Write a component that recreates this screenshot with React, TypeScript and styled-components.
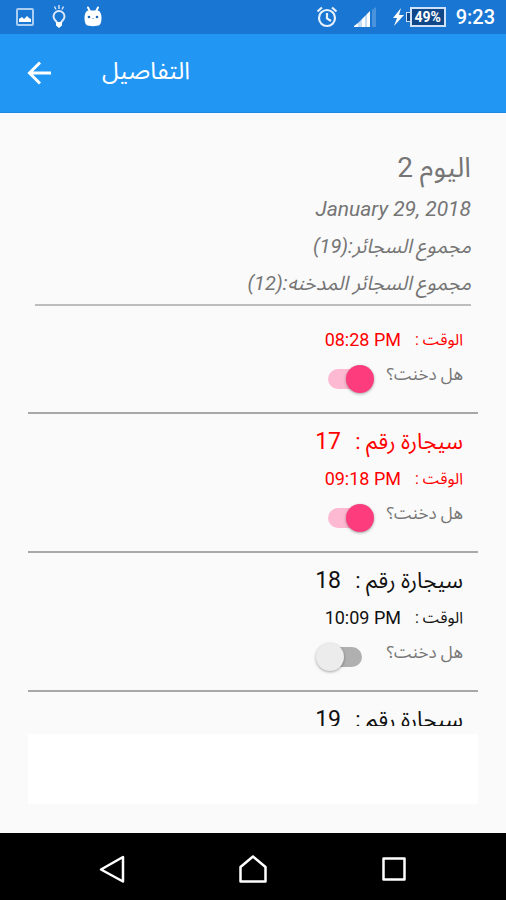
import React from "react";
import styled, { createGlobalStyle } from "styled-components";

const GlobalStyle = createGlobalStyle`
  *, *::before, *::after { box-sizing: border-box; }
  body {
    margin: 0;
    background: #fafafa;
    font-family: Roboto, "Noto Sans Arabic", "Noto Naskh Arabic", "DejaVu Sans", sans-serif;
  }
  h1, h2, p { margin: 0; font-weight: 400; }
`;

const Screen = styled.div`
  display: flex;
  flex-direction: column;
  height: 100vh;
  background: #fafafa;
`;

const StatusBar = styled.div`
  display: flex;
  align-items: center;
  justify-content: space-between;
  flex: none;
  height: 34px;
  padding: 0 11px 0 15px;
  background: #1976d2;
  color: #fff;
`;

const StatusGroup = styled.div<{ $gap: number }>`
  display: flex;
  align-items: center;
  gap: ${(p) => p.$gap}px;
`;

const Clock = styled.span`
  margin-left: 8px;
  font-size: 20px;
  font-weight: 500;
  line-height: 34px;
`;

const Battery = styled.span`
  display: flex;
  align-items: center;
`;

const BatteryTip = styled.span`
  width: 4px;
  height: 10px;
  border: 1px solid #cfe2f7;
  border-right: 0;
  background: #0f4788;
`;

const BatteryBody = styled.span`
  width: 36px;
  height: 20px;
  border: 2px solid #cfe2f7;
  background: #0f4788;
  font-size: 14px;
  font-weight: 700;
  line-height: 16px;
  text-align: center;
`;

const AppBar = styled.header`
  display: flex;
  align-items: center;
  gap: 48px;
  flex: none;
  height: 79px;
  padding: 0 24px;
  border-bottom: 1px solid #1e88e5;
  background: #2196f3;
  color: #fff;
`;

const IconButton = styled.button`
  display: flex;
  padding: 0;
  border: 0;
  background: none;
  color: inherit;
  cursor: pointer;
`;

const AppTitle = styled.h1`
  font-size: 24px;
  line-height: 32px;
  padding-bottom: 4px;
`;

const Content = styled.main`
  display: flex;
  flex-direction: column;
  flex: 1;
  min-height: 0;
  padding: 32px 28px 29px;
`;

const Summary = styled.section`
  margin: 0 7px;
  padding-bottom: 2px;
  border-bottom: 2px solid #bdbdbd;
  color: #757575;
`;

const DayTitle = styled.h2`
  font-size: 28px;
  line-height: 46px;
`;

const SummaryLine = styled.p`
  font-size: 20px;
  font-style: italic;
  line-height: 37px;
`;

const SummaryDate = styled(SummaryLine)`
  font-size: 21px;
`;

const List = styled.ul`
  flex: 1;
  min-height: 0;
  margin: 16px 0 0;
  padding: 0;
  overflow: hidden;
  list-style: none;
`;

const Entry = styled.li<{ $smoked: boolean }>`
  padding: 0 15px 18px;
  border-bottom: 2px solid #a8a8a8;
  color: ${(p) => (p.$smoked ? "#ff0000" : "#111111")};
`;

const EntryTitle = styled.div`
  display: flex;
  padding-top: 9px;
  font-size: 22px;
  line-height: 38px;
`;

const TitleLabel = styled.span`
  width: 122px;
  white-space: nowrap;
`;

const TitleNumber = styled.span`
  font-size: 23px;
`;

const EntryTime = styled.div`
  display: flex;
  font-size: 16px;
  line-height: 36px;
`;

const TimeLabel = styled.span`
  width: 62px;
  white-space: nowrap;
`;

const TimeValue = styled.span`
  font-size: 18px;
`;

const Question = styled.label`
  display: flex;
  align-items: flex-start;
  gap: 13px;
  height: 36px;
  color: #757575;
  font-size: 17px;
  line-height: 32px;
`;

const QuestionText = styled.span`
  white-space: nowrap;
`;

const Switch = styled.input`
  position: relative;
  appearance: none;
  flex: none;
  width: 58px;
  height: 28px;
  margin: 7px 0 0;
  direction: ltr;
  cursor: pointer;

  &::before {
    content: "";
    position: absolute;
    inset: 4px 12px;
    border-radius: 10px;
    background: #b0b0b0;
  }
  &::after {
    content: "";
    position: absolute;
    top: 0;
    left: 0;
    width: 28px;
    height: 28px;
    border-radius: 50%;
    background: #ececec;
    box-shadow: 0 1px 3px rgba(0, 0, 0, 0.35);
  }
  &:checked::before { background: #fdb9d1; }
  &:checked::after { left: 30px; background: #fc3c7c; }
`;

const AdSlot = styled.aside`
  flex: none;
  height: 70px;
  margin-top: 8px;
  background: #fff;
`;

const NavBar = styled.nav`
  display: flex;
  align-items: center;
  justify-content: space-around;
  flex: none;
  height: 67px;
  padding: 4px 42px 0;
  background: #000;
  color: #fff;
`;

type CigaretteEntry = { id: number; time?: string; smoked: boolean; titleShown?: boolean };

const entries: CigaretteEntry[] = [
  { id: 16, time: "08:28 PM", smoked: true, titleShown: false },
  { id: 17, time: "09:18 PM", smoked: true },
  { id: 18, time: "10:09 PM", smoked: false },
  { id: 19, smoked: false },
];

function EntryRow({ entry }: { entry: CigaretteEntry }) {
  const switchId = `smoked-${entry.id}`;
  return (
    <Entry $smoked={entry.smoked}>
      {entry.titleShown !== false && (
        <EntryTitle>
          <TitleLabel>سيجارة رقم :</TitleLabel>
          <TitleNumber>{entry.id}</TitleNumber>
        </EntryTitle>
      )}
      {entry.time && (
        <>
          <EntryTime>
            <TimeLabel>الوقت :</TimeLabel>
            <TimeValue dir="ltr">{entry.time}</TimeValue>
          </EntryTime>
          <Question htmlFor={switchId}>
            <QuestionText>هل دخنت؟</QuestionText>
            <Switch id={switchId} type="checkbox" role="switch" defaultChecked={entry.smoked} />
          </Question>
        </>
      )}
    </Entry>
  );
}

const PictureIcon = () => (
  <svg width="20" height="20" viewBox="0 0 20 20" aria-hidden="true">
    <rect x="2" y="2" width="16" height="16" rx="1" fill="none" stroke="#a9cdf3" strokeWidth="2" />
    <path d="M4 15v-3l3-2 2 2 3-3 2 2 2 1v3z" fill="#fff" />
  </svg>
);

const BulbIcon = () => (
  <svg width="18" height="24" viewBox="0 0 18 24" fill="none" stroke="#d9e9fb" aria-hidden="true">
    <path d="M7 18c0-2-3.500-3-3.500-6.500a5.500 5.500 0 0 1 11 0c0 3.500-3.500 4.500-3.500 6.500z" strokeWidth="2" />
    <path d="M6 17h6v3.500l-3 2.500-3-2.500z" fill="#fff" stroke="none" />
    <path d="M9 0v4M4.500 1.500l1.500 3M13.500 1.500l-1.500 3" strokeWidth="1.400" />
  </svg>
);

const RobotIcon = () => (
  <svg width="20" height="22" viewBox="0 0 20 22" aria-hidden="true">
    <path d="M5 1.500l2 4M15 1.500l-2 4" stroke="#fff" strokeWidth="2" strokeLinecap="round" />
    <path d="M5 4.500h10c2.500 1 3.500 4 3.500 7.500 0 3-.5 5.500-2 7-2 1.500-11 1.500-13 0-1.500-1.500-2-4-2-7 0-3.500 1-6.500 3.500-7.500z" fill="#fff" />
    <circle cx="6" cy="11" r="1.300" fill="#1b66b5" />
    <circle cx="14" cy="11" r="1.300" fill="#1b66b5" />
    <path d="M9 12.500h2" stroke="#9fc5ee" />
  </svg>
);

const AlarmIcon = () => (
  <svg width="22" height="22" viewBox="0 0 22 22" fill="none" stroke="#e6f1fd" strokeWidth="2.200" aria-hidden="true">
    <circle cx="11" cy="12" r="8" />
    <path d="M11 7v5.500l4 2.500M1.500 5.500l4.500-4M20.500 5.500l-4.500-4" />
  </svg>
);

const SignalIcon = () => (
  <svg width="22" height="20" viewBox="0 0 22 20" aria-hidden="true">
    <path d="M0 20v-1l4-3v4z" fill="#fff" />
    <path d="M4 20v-4l4-4v8z" fill="#c5dcf6" />
    <path d="M8 20v-8l3-3v11z" fill="#fff" />
    <path d="M11 20V9l2-2v13z" fill="#c5dcf6" />
    <path d="M13 20V7l3-3v16z" fill="#fff" />
    <path d="M18 20V3l4-3v20z" fill="#4a92dc" />
  </svg>
);

const BoltIcon = () => (
  <svg width="12" height="18" viewBox="0 0 12 18" aria-hidden="true">
    <path d="M9 0L1 10h4l-3 8 10-11H7z" fill="#fff" />
  </svg>
);

const BackArrowIcon = () => (
  <svg width="30" height="26" viewBox="0 0 30 26" fill="none" stroke="currentColor" strokeWidth="3" aria-hidden="true">
    <path d="M27 13H6M16 2.500L5.500 13 16 23.500" />
  </svg>
);

const NavBackIcon = () => (
  <svg width="30" height="30" viewBox="0 0 30 30" fill="none" stroke="currentColor" strokeWidth="2.500" strokeLinejoin="round" aria-hidden="true">
    <path d="M26 3v24.500L4 15.500z" />
  </svg>
);

const NavHomeIcon = () => (
  <svg width="30" height="30" viewBox="0 0 30 30" fill="none" stroke="currentColor" strokeWidth="2.500" strokeLinejoin="round" aria-hidden="true">
    <path d="M2.500 27.500V13L15 2.500 27.500 13v14.500z" />
  </svg>
);

const NavRecentIcon = () => (
  <svg width="30" height="30" viewBox="0 0 30 30" fill="none" stroke="currentColor" strokeWidth="2.500" strokeLinejoin="round" aria-hidden="true">
    <rect x="4.500" y="4.500" width="21" height="21" />
  </svg>
);

export default function App() {
  return (
    <Screen>
      <GlobalStyle />
      <StatusBar>
        <StatusGroup $gap={15}>
          <PictureIcon />
          <BulbIcon />
          <RobotIcon />
        </StatusGroup>
        <StatusGroup $gap={2}>
          <StatusGroup $gap={16}>
            <AlarmIcon />
            <SignalIcon />
            <BoltIcon />
          </StatusGroup>
          <Battery>
            <BatteryTip />
            <BatteryBody>49%</BatteryBody>
          </Battery>
          <Clock>9:23</Clock>
        </StatusGroup>
      </StatusBar>
      <AppBar>
        <IconButton type="button" aria-label="رجوع">
          <BackArrowIcon />
        </IconButton>
        <AppTitle dir="rtl">التفاصيل</AppTitle>
      </AppBar>
      <Content dir="rtl">
        <Summary>
          <DayTitle>اليوم 2</DayTitle>
          <SummaryDate><bdi>January 29, 2018</bdi></SummaryDate>
          <SummaryLine>مجموع السجائر:(19)</SummaryLine>
          <SummaryLine>مجموع السجائر المدخنه:(12)</SummaryLine>
        </Summary>
        <List>
          {entries.map((entry) => (
            <EntryRow key={entry.id} entry={entry} />
          ))}
        </List>
        <AdSlot />
      </Content>
      <NavBar>
        <IconButton type="button" aria-label="السابق">
          <NavBackIcon />
        </IconButton>
        <IconButton type="button" aria-label="الرئيسية">
          <NavHomeIcon />
        </IconButton>
        <IconButton type="button" aria-label="التطبيقات الأخيرة">
          <NavRecentIcon />
        </IconButton>
      </NavBar>
    </Screen>
  );
}
